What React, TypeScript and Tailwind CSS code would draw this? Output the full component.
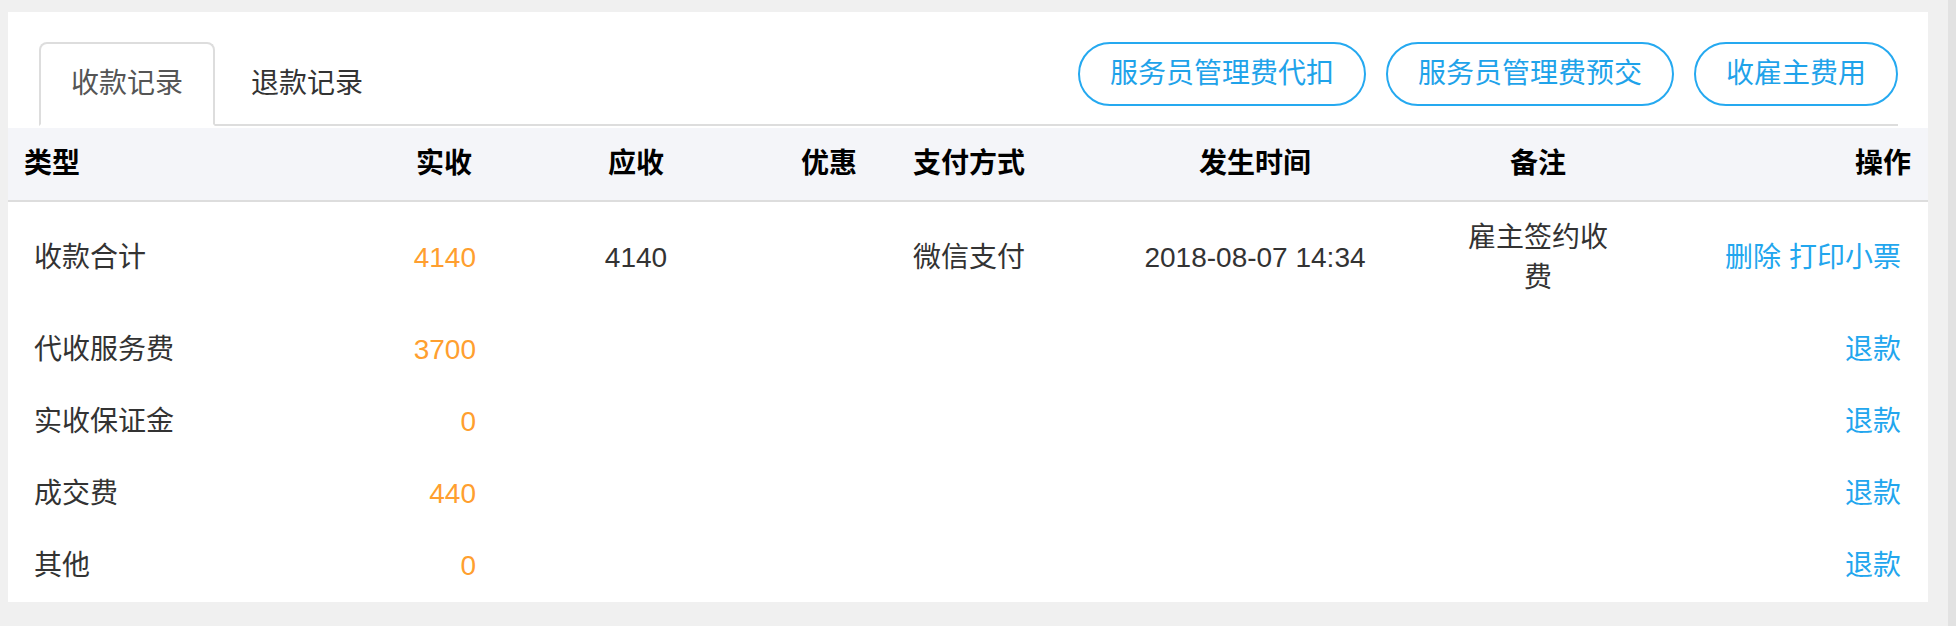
import React from "react";

const font = "font-['Liberation_Sans','Noto_Sans_CJK_SC',sans-serif]";

const cols = "grid grid-cols-[300px_180px_296px_90px_234px_294px_272px_254px]";

type Row = {
  type: string;
  actual: string;
  due?: string;
  pay?: string;
  time?: string;
  note?: string;
  ops: string[];
};

const rows: Row[] = [
  {
    type: "收款合计",
    actual: "4140",
    due: "4140",
    pay: "微信支付",
    time: "2018-08-07 14:34",
    note: "雇主签约收费",
    ops: ["删除", "打印小票"],
  },
  { type: "代收服务费", actual: "3700", ops: ["退款"] },
  { type: "实收保证金", actual: "0", ops: ["退款"] },
  { type: "成交费", actual: "440", ops: ["退款"] },
  { type: "其他", actual: "0", ops: ["退款"] },
];

export default function App() {
  return (
    <div className={`${font} flex min-h-[626px] w-[1956px] bg-[#f0f0f0] text-[28px]`}>
      <div className="ml-[8px] mt-[12px] mb-[25px] w-[1920px] self-start bg-white">
        {/* Tabs + buttons */}
        <div className="ml-[31px] mr-[30px] mt-[30px] flex items-start justify-between border-b-2 border-[#dddddd]">
          <div className="flex items-end">
            <div className="-mb-[2px] rounded-t-[8px] border-2 border-[#dddddd] border-b-white bg-white px-[30px] py-[20px] leading-[40px] text-[#555555]">
              收款记录
            </div>
            <div className="-mb-[2px] ml-[4px] border-2 border-transparent px-[30px] py-[20px] leading-[40px] text-[#333333]">
              退款记录
            </div>
          </div>
          <div className="flex gap-[20px]">
            {["服务员管理费代扣", "服务员管理费预交", "收雇主费用"].map((t) => (
              <div
                key={t}
                className="flex h-[64px] items-center rounded-full border-2 border-[#25a9f0] px-[30px] leading-[40px] text-[#1fa3ea]"
              >
                {t}
              </div>
            ))}
          </div>
        </div>

        {/* Table header */}
        <div
          className={`${cols} mt-[2px] h-[74px] items-center border-b-2 border-[#dddddd] bg-[#f4f5f9] font-bold leading-[40px] text-black`}
        >
          <div className="pl-[16px]">类型</div>
          <div className="pr-[16px] text-right">实收</div>
          <div className="text-center">应收</div>
          <div className="text-center">优惠</div>
          <div className="pl-[39px]">支付方式</div>
          <div className="text-center">发生时间</div>
          <div className="text-center">备注</div>
          <div className="pr-[17px] text-right">操作</div>
        </div>

        {/* Body */}
        {rows.map((r) => (
          <div key={r.type} className={`${cols} items-center py-[16px] leading-[40px] text-[#333333]`}>
            <div className="pl-[26px]">{r.type}</div>
            <div className="pr-[12px] text-right text-[#ff9f2f]">{r.actual}</div>
            <div className="text-center">{r.due ?? ""}</div>
            <div className="text-center"></div>
            <div className="pl-[39px]">{r.pay ?? ""}</div>
            <div className="text-center">{r.time ?? ""}</div>
            <div className="flex justify-center">
              {r.note ? <div className="w-[150px] text-center">{r.note}</div> : null}
            </div>
            <div className="flex justify-end gap-[8px] pr-[27px] text-[#22a6ee]">
              {r.ops.map((o) => (
                <span key={o}>{o}</span>
              ))}
            </div>
          </div>
        ))}
      </div>
      <div className="ml-[20px] w-[8px] self-stretch bg-[#e2e2e2]"></div>
    </div>
  );
}
